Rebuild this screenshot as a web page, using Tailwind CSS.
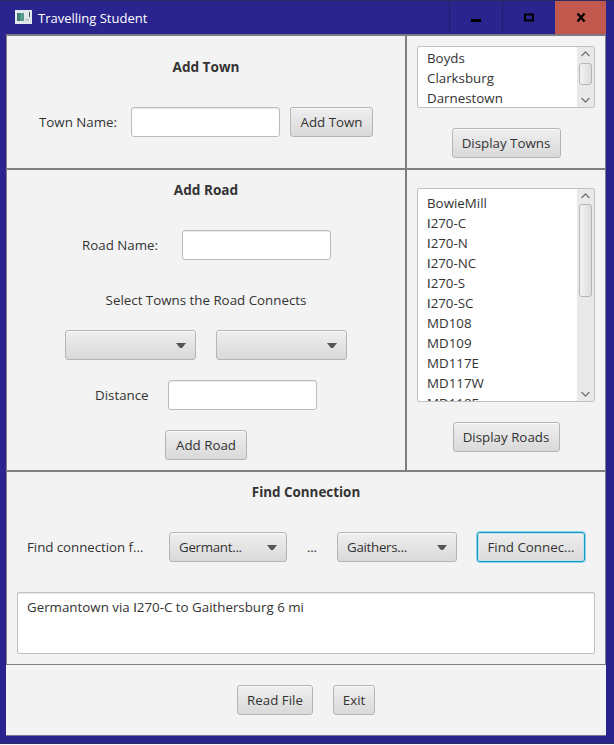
<!DOCTYPE html>
<html lang="en">
<head>
<meta charset="utf-8">
<title>Travelling Student</title>
<script src="https://cdn.jsdelivr.net/npm/@tailwindcss/browser@4"></script>
</head>
<body class="w-[614px] h-[745px] overflow-hidden bg-[#f7f7fb] font-['Open_Sans',sans-serif] text-[13.33px] leading-5 text-[#333] whitespace-nowrap">
<div class="flex flex-col w-[614px] h-[744px] bg-[#2a248e] border-t border-t-[#2d2a60] border-b border-b-[#2d2a60] pl-[6px] pr-[8px]">
  <header class="flex h-[33px] shrink-0 items-center text-white">
    <svg class="ml-[9px] mb-[2px] w-[17px] h-[14px] shrink-0" viewBox="0 0 17 14"><rect width="17" height="14" fill="#e3e9ea"/><rect x="2" y="3" width="7" height="8" fill="#5a9c8a"/><rect x="2" y="3" width="3" height="8" fill="#3f7f78"/><path d="M10 9l2-1 2 1v2h-4z" fill="#c5cfd2"/><path d="M14.5 2v5" stroke="#36545c"/></svg>
    <h1 class="ml-[6px] w-[411px] shrink-0 font-normal text-[13px]"><span>Travelling Student</span></h1>
    <div class="flex h-[33px] w-[53px] shrink-0 items-center justify-center border-l border-[#1f1c62]"><svg class="w-[12px] h-[12px]" viewBox="0 0 12 12"><path d="M1 8.5h10" stroke="#000" stroke-width="3"/></svg></div>
    <div class="flex h-[33px] w-[53px] shrink-0 items-center justify-center border-l border-[#1f1c62]"><svg class="w-[12px] h-[12px]" viewBox="0 0 12 12"><rect x="2" y="2.5" width="8" height="6" fill="none" stroke="#000" stroke-width="2"/></svg></div>
    <div class="flex h-[33px] w-[51px] shrink-0 items-center justify-center bg-[#c2594f]"><svg class="w-[12px] h-[12px]" viewBox="0 0 12 12"><path d="M2.5 1.5l7 8M9.500 1.5l-7 8" stroke="#000" stroke-width="2.3"/></svg></div>
  </header>
  <main class="flex flex-col w-[600px] h-[702px] shrink-0 bg-[#f3f3f3] border-t border-t-[#77758a]">
    <div class="flex h-[134px]">
      <section class="flex flex-col w-[400px] border border-[#808080]">
        <h2 class="mt-[21px] h-5 text-center font-bold text-[13.6px]"><span>Add Town</span></h2>
        <div class="mt-[30px] ml-[32px] flex h-[30px] items-center">
          <label class="w-[92px]">Town Name:</label>
          <div class="w-[149px] h-[30px] rounded-[3px] border border-[#bcbcbc] bg-white shadow-[inset_0_1px_1px_#e8e8e8]"></div>
          <button class="ml-[10px] w-[83px] h-[30px] rounded-[3px] border border-[#b5b5b5] bg-linear-to-b from-[#efefef] to-[#d9d9d9] shadow-[inset_0_1px_0_#fbfbfb]">Add Town</button>
        </div>
      </section>
      <section class="flex flex-col items-center w-[200px] border border-[#808080]">
        <div class="mt-[10px] flex w-[178px] h-[62px] overflow-hidden rounded-[2px] border border-[#c0c0c0] bg-white">
          <ul class="w-[159px] pl-[9px] pt-[1px]"><li>Boyds</li><li>Clarksburg</li><li>Darnestown</li></ul>
          <div class="flex flex-col items-center w-[17px] bg-[#e9e9e9]">
            <svg class="w-[11px] h-[16px] shrink-0" viewBox="0 0 11 16"><path d="M1.500 9l4-4 4 4" fill="none" stroke="#777" stroke-width="1.3"/></svg>
            <div class="w-[13px] h-[22px] rounded-[3px] border border-[#b5b5b5] bg-linear-to-r from-[#f3f3f3] to-[#dcdcdc]"></div>
            <svg class="mt-auto w-[11px] h-[15px] shrink-0" viewBox="0 0 11 15"><path d="M1.5 6l4 4 4-4" fill="none" stroke="#777" stroke-width="1.3"/></svg>
          </div>
        </div>
        <button class="mt-[20px] w-[109px] h-[30px] rounded-[3px] border border-[#b5b5b5] bg-linear-to-b from-[#efefef] to-[#d9d9d9] shadow-[inset_0_1px_0_#fbfbfb]">Display Towns</button>
      </section>
    </div>
    <div class="flex h-[302px]">
      <section class="flex flex-col w-[400px] border border-[#808080]">
        <h2 class="mt-[10px] h-5 text-center font-bold text-[13.6px]"><span>Add Road</span></h2>
        <div class="mt-[30px] ml-[75px] flex h-[30px] items-center">
          <label class="w-[100px]">Road Name:</label>
          <div class="w-[149px] h-[30px] rounded-[3px] border border-[#bcbcbc] bg-white shadow-[inset_0_1px_1px_#e8e8e8]"></div>
        </div>
        <p class="mt-[30px] h-5 text-center"><span>Select Towns the Road Connects</span></p>
        <div class="mt-[20px] flex justify-center gap-5 h-[30px]">
          <div class="flex items-center justify-end pr-[9px] w-[131px] rounded-[3px] border border-[#b5b5b5] bg-linear-to-b from-[#efefef] to-[#d9d9d9] shadow-[inset_0_1px_0_#fbfbfb]"><svg class="w-[10px] h-[5px]" viewBox="0 0 10 5"><path d="M0 0h10L6 5H4z" fill="#555"/></svg></div>
          <div class="flex items-center justify-end pr-[9px] w-[131px] rounded-[3px] border border-[#b5b5b5] bg-linear-to-b from-[#efefef] to-[#d9d9d9] shadow-[inset_0_1px_0_#fbfbfb]"><svg class="w-[10px] h-[5px]" viewBox="0 0 10 5"><path d="M0 0h10L6 5H4z" fill="#555"/></svg></div>
        </div>
        <div class="mt-[20px] ml-[88px] flex h-[30px] items-center">
          <label class="w-[73px]">Distance</label>
          <div class="w-[149px] h-[30px] rounded-[3px] border border-[#bcbcbc] bg-white shadow-[inset_0_1px_1px_#e8e8e8]"></div>
        </div>
        <button class="mt-[20px] mx-auto w-[82px] h-[30px] rounded-[3px] border border-[#b5b5b5] bg-linear-to-b from-[#efefef] to-[#d9d9d9] shadow-[inset_0_1px_0_#fbfbfb]">Add Road</button>
      </section>
      <section class="flex flex-col items-center w-[200px] border border-[#808080]">
        <div class="mt-[18px] flex w-[178px] h-[214px] shrink-0 overflow-hidden rounded-[2px] border border-[#c0c0c0] bg-white">
          <ul class="w-[159px] h-[212px] overflow-hidden pl-[9px] pt-[4px]"><li>BowieMill</li><li><span class="font-['Roboto'] leading-none">I</span>270-C</li><li><span class="font-['Roboto'] leading-none">I</span>270-N</li><li><span class="font-['Roboto'] leading-none">I</span>270-NC</li><li><span class="font-['Roboto'] leading-none">I</span>270-S</li><li><span class="font-['Roboto'] leading-none">I</span>270-SC</li><li>MD108</li><li>MD109</li><li>MD117E</li><li>MD117W</li><li>MD118E</li></ul>
          <div class="flex flex-col items-center w-[17px] bg-[#e9e9e9]">
            <svg class="w-[11px] h-[15px] shrink-0" viewBox="0 0 11 15"><path d="M1.500 9l4-4 4 4" fill="none" stroke="#777" stroke-width="1.3"/></svg>
            <div class="w-[13px] h-[93px] rounded-[3px] border border-[#b5b5b5] bg-linear-to-r from-[#f3f3f3] to-[#dcdcdc]"></div>
            <svg class="mt-auto w-[11px] h-[15px] shrink-0" viewBox="0 0 11 15"><path d="M1.5 6l4 4 4-4" fill="none" stroke="#777" stroke-width="1.3"/></svg>
          </div>
        </div>
        <button class="mt-[20px] w-[107px] h-[30px] rounded-[3px] border border-[#b5b5b5] bg-linear-to-b from-[#efefef] to-[#d9d9d9] shadow-[inset_0_1px_0_#fbfbfb]">Display Roads</button>
      </section>
    </div>
    <section class="flex flex-col h-[194px] border border-[#808080] px-[10px]">
      <h2 class="mt-[10px] h-5 text-center font-bold text-[13.4px]"><span>Find Connection</span></h2>
      <div class="mt-[30px] ml-[10px] flex h-[30px] items-center">
        <span class="w-[142px] tracking-[-0.05px]">Find connection f...</span>
        <div class="flex h-[30px] items-center justify-between pl-[9px] pr-[9px] w-[118px] rounded-[3px] border border-[#b5b5b5] bg-linear-to-b from-[#efefef] to-[#d9d9d9] shadow-[inset_0_1px_0_#fbfbfb]"><span class="tracking-[-0.3px]">Germant...</span><svg class="w-[10px] h-[5px]" viewBox="0 0 10 5"><path d="M0 0h10L6 5H4z" fill="#555"/></svg></div>
        <span class="w-[50px] pl-[20px] tracking-[-0.3px]">...</span>
        <div class="flex h-[30px] items-center justify-between pl-[9px] pr-[9px] w-[120px] rounded-[3px] border border-[#b5b5b5] bg-linear-to-b from-[#efefef] to-[#d9d9d9] shadow-[inset_0_1px_0_#fbfbfb]"><span class="tracking-[-0.3px]">Gaithers...</span><svg class="w-[10px] h-[5px]" viewBox="0 0 10 5"><path d="M0 0h10L6 5H4z" fill="#555"/></svg></div>
        <button class="ml-[20px] w-[108px] h-[30px] rounded-[3px] border border-[#1696bf] bg-linear-to-b from-[#efefef] to-[#d9d9d9] shadow-[0_0_0_1px_#90d4ea,inset_0_0_0_1px_#bfe4ef]">Find Connec...</button>
      </div>
      <div class="mt-[30px] h-[62px] rounded-[2px] border border-[#c0c0c0] bg-white px-[9px] pt-[4px] shadow-[inset_0_1px_1px_#e8e8e8]"><span>Germantown via <span class="font-['Roboto'] leading-none">I</span>270-C to Gaithersburg 6 mi</span></div>
    </section>
    <footer class="flex justify-center gap-5 h-[71px] pt-[20px] border-b border-b-[#77758a]">
      <button class="w-[76px] h-[30px] rounded-[3px] border border-[#b5b5b5] bg-linear-to-b from-[#efefef] to-[#d9d9d9] shadow-[inset_0_1px_0_#fbfbfb]">Read File</button>
      <button class="w-[42px] h-[30px] rounded-[3px] border border-[#b5b5b5] bg-linear-to-b from-[#efefef] to-[#d9d9d9] shadow-[inset_0_1px_0_#fbfbfb]">Exit</button>
    </footer>
  </main>
</div>
</body>
</html>
